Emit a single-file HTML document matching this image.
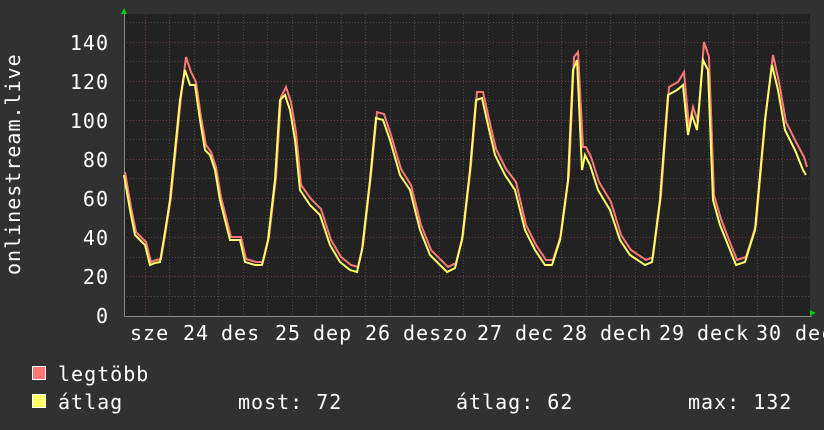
<!DOCTYPE html>
<html><head><meta charset="utf-8"><style>
html,body{margin:0;padding:0;background:#313131;width:824px;height:430px;overflow:hidden}
svg{display:block}
text{font-family:"DejaVu Sans Mono","Liberation Mono",monospace;fill:#fff;font-size:20px;letter-spacing:1px}
</style></head><body>
<svg width="824" height="430" viewBox="0 0 824 430" xmlns="http://www.w3.org/2000/svg">
<rect x="0" y="0" width="824" height="430" fill="#313131"/>
<rect x="124" y="14" width="686" height="302" fill="#222"/>
<g stroke="#4a4a4a" stroke-width="1" stroke-dasharray="1,2">
<line x1="124" y1="296.5" x2="810" y2="296.5"/><line x1="124" y1="257.5" x2="810" y2="257.5"/>
<line x1="124" y1="218.5" x2="810" y2="218.5"/><line x1="124" y1="178.5" x2="810" y2="178.5"/>
<line x1="124" y1="139.5" x2="810" y2="139.5"/><line x1="124" y1="100.5" x2="810" y2="100.5"/>
<line x1="124" y1="61.5" x2="810" y2="61.5"/><line x1="124" y1="22.5" x2="810" y2="22.5"/>
<line x1="169.5" y1="14" x2="169.5" y2="316"/><line x1="194.5" y1="14" x2="194.5" y2="316"/><line x1="218.5" y1="14" x2="218.5" y2="316"/>
<line x1="267.5" y1="14" x2="267.5" y2="316"/><line x1="292.5" y1="14" x2="292.5" y2="316"/><line x1="316.5" y1="14" x2="316.5" y2="316"/>
<line x1="365.5" y1="14" x2="365.5" y2="316"/><line x1="390.5" y1="14" x2="390.5" y2="316"/><line x1="414.5" y1="14" x2="414.5" y2="316"/>
<line x1="463.5" y1="14" x2="463.5" y2="316"/><line x1="488.5" y1="14" x2="488.5" y2="316"/><line x1="512.5" y1="14" x2="512.5" y2="316"/>
<line x1="561.5" y1="14" x2="561.5" y2="316"/><line x1="586.5" y1="14" x2="586.5" y2="316"/><line x1="610.5" y1="14" x2="610.5" y2="316"/>
<line x1="659.5" y1="14" x2="659.5" y2="316"/><line x1="684.5" y1="14" x2="684.5" y2="316"/><line x1="708.5" y1="14" x2="708.5" y2="316"/>
<line x1="757.5" y1="14" x2="757.5" y2="316"/><line x1="782.5" y1="14" x2="782.5" y2="316"/>
</g>
<g stroke="#6a3a3a" stroke-width="1" stroke-dasharray="1,2">
<line x1="124" y1="276.5" x2="810" y2="276.5"/><line x1="124" y1="237.5" x2="810" y2="237.5"/>
<line x1="124" y1="198.5" x2="810" y2="198.5"/><line x1="124" y1="159.5" x2="810" y2="159.5"/>
<line x1="124" y1="120.5" x2="810" y2="120.5"/><line x1="124" y1="81.5" x2="810" y2="81.5"/>
<line x1="124" y1="42.5" x2="810" y2="42.5"/>
<line x1="145.5" y1="14" x2="145.5" y2="316"/><line x1="243.5" y1="14" x2="243.5" y2="316"/><line x1="341.5" y1="14" x2="341.5" y2="316"/>
<line x1="439.5" y1="14" x2="439.5" y2="316"/><line x1="537.5" y1="14" x2="537.5" y2="316"/><line x1="635.5" y1="14" x2="635.5" y2="316"/><line x1="733.5" y1="14" x2="733.5" y2="316"/>
</g>
<line x1="124" y1="316.5" x2="812" y2="316.5" stroke="#888"/>
<line x1="124.5" y1="12" x2="124.5" y2="316" stroke="#888"/>
<polygon points="121,14 124,8 127,14" fill="#0c0"/>
<polygon points="810,310 816,313 810,316" fill="#0c0"/>
<g fill="none" stroke-width="2" stroke-linejoin="miter">
<polyline transform="translate(1,-3)" stroke="#f77" points="124,175 130,210 135,235 140,240 145,245 150,265 155,263 160,262 165,232 170,200 175,150 180,100 185,60 190,75 195,85 200,120 205,148 210,155 215,170 220,200 225,220 230,240 235,240 240,240 245,262 255,265 262,265 268,240 275,180 280,100 285,90 290,105 295,135 300,188 310,202 320,212 330,243 340,260 350,268 357,270 362,248 370,178 376,115 383,117 390,138 400,172 405,180 410,188 420,228 430,253 440,263 447,270 455,266 462,238 470,168 476,95 482,95 488,122 495,152 505,172 515,185 525,228 535,248 545,263 552,263 560,238 568,178 573,60 577,55 582,150 585,150 590,160 598,185 610,205 620,238 630,253 645,263 652,260 660,198 668,90 677,85 683,75 688,130 692,110 697,125 703,45 708,60 713,198 720,222 728,243 736,263 745,260 755,228 765,115 772,58 778,85 785,125 795,145 803,160 806,170"/>
<polyline stroke="#ff6" points="124,175 130,210 135,235 140,240 145,245 150,265 155,263 160,262 165,232 170,200 175,150 180,100 185,70 190,85 195,85 200,120 205,150 210,155 215,170 220,200 225,220 230,240 235,240 240,240 245,262 255,265 262,265 268,240 275,180 280,100 285,95 290,110 295,140 300,190 310,205 320,215 330,245 340,262 350,270 357,272 362,250 370,180 376,118 383,120 390,140 400,175 410,190 420,230 430,255 440,265 447,272 455,268 462,240 470,170 476,100 482,98 488,125 495,155 505,175 515,190 525,230 535,250 545,265 552,265 560,240 568,180 573,70 577,60 582,170 585,155 590,165 598,190 610,210 620,240 630,255 645,265 652,262 660,200 668,95 677,90 683,85 688,135 692,115 697,130 703,60 708,70 713,200 720,225 728,245 736,265 745,262 755,230 765,120 772,65 778,90 785,130 795,150 803,170 806,175"/>
</g>
<g text-anchor="end">
<text x="109" y="323">0</text><text x="109" y="284">20</text><text x="109" y="245">40</text>
<text x="109" y="206">60</text><text x="109" y="167">80</text><text x="109" y="128">100</text>
<text x="109" y="89">120</text><text x="109" y="50">140</text>
</g>
<text transform="translate(20,275) rotate(-90)">onlinestream.live</text>
<g>
<text x="130" y="340">sze</text><text x="183" y="340">24</text><text x="221" y="340">des</text>
<text x="275" y="340">25</text><text x="313" y="340">dep</text><text x="365" y="340">26</text>
<text x="403" y="340">deszo</text><text x="477" y="340">27</text><text x="515" y="340">dec</text>
<text x="562" y="340">28</text><text x="600" y="340">dech</text><text x="659" y="340">29</text>
<text x="697" y="340">deck</text><text x="756" y="340">30</text><text x="795" y="340">dec</text>
</g>
<rect x="32.5" y="366.5" width="13" height="13" fill="#f77" stroke="#fff"/>
<rect x="32.5" y="394.5" width="13" height="13" fill="#ff6" stroke="#fff"/>
<text x="58" y="381">legtöbb</text>
<text x="58" y="409">átlag</text>
<text x="238" y="409">most: 72</text>
<text x="456" y="409">átlag: 62</text>
<text x="688" y="409">max: 132</text>
</svg>
</body></html>
